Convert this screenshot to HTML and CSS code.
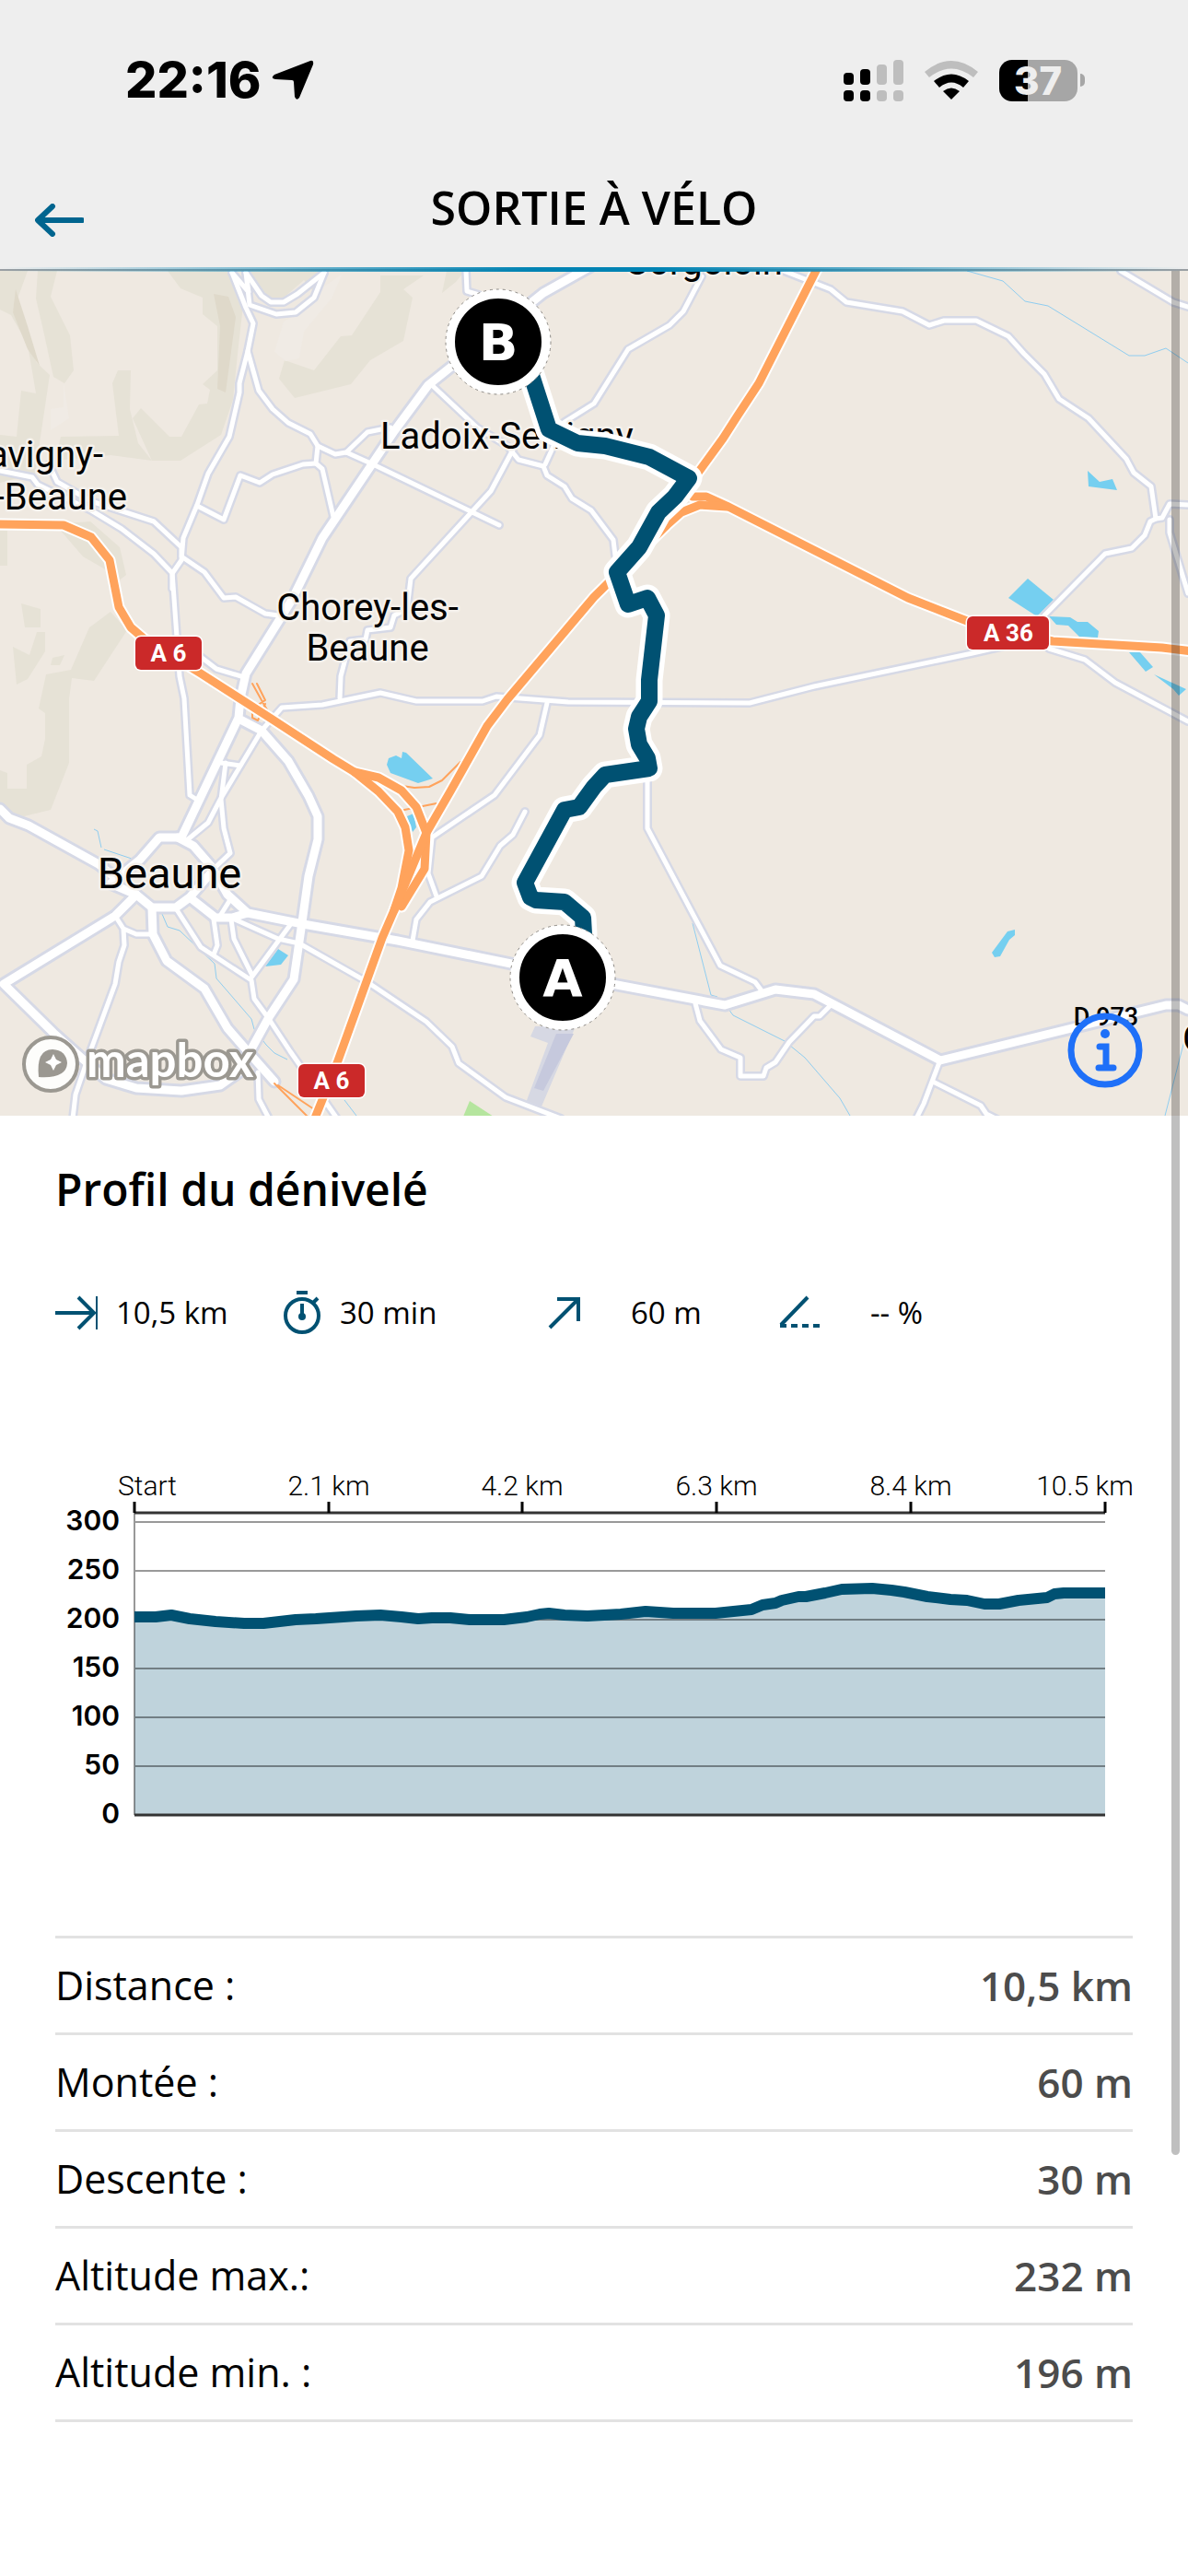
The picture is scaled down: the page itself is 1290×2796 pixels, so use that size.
FILE: index.html
```html
<!DOCTYPE html>
<html lang="fr">
<head>
  <meta charset="UTF-8">
  <meta name="viewport" content="width=device-width, initial-scale=1.0">
  <title>Sortie à vélo</title>
  <link rel="stylesheet" href="styles.css">
</head>
<body>
  <header class="top">
    <div class="status">
      <div class="status-left">
        <span class="time">22:16</span>
        <svg class="location" viewBox="0 0 46 44"><path d="M42 1q4-1 3 4L30 41q-3 4-5-1l-1-16q0-2-2-2L4 21q-6-1-1-5z"/></svg>
      </div>
      <div class="status-right">
        <svg class="signal" viewBox="0 0 65 45">
          <rect y="14" width="11" height="13" rx="4"/><rect y="33" width="11" height="12" rx="4"/>
          <rect x="18" y="10" width="11" height="17" rx="4"/><rect x="18" y="33" width="11" height="12" rx="4"/>
          <g class="dim"><rect x="36" y="5" width="11" height="22" rx="4"/><rect x="36" y="33" width="11" height="12" rx="4"/>
          <rect x="54" width="11" height="27" rx="4"/><rect x="54" y="33" width="11" height="12" rx="4"/></g>
        </svg>
        <svg class="wifi" viewBox="0 0 58 42">
          <path class="dim" d="M0 12Q29-12 58 12L53 18Q29-1 5 18z"/>
          <path d="M10 22Q29 7 48 22L42 29Q29 18 16 29z"/>
          <path d="M20 33Q29 26 38 33L29 42z"/>
        </svg>
        <div class="battery"><span class="battery-body">37</span><span class="battery-tip"></span></div>
      </div>
    </div>
    <div class="navbar">
      <button class="back" type="button" aria-label="Retour">
        <svg viewBox="0 0 53 36"><path d="M51 18H4M19 3L3 18L19 33"/></svg>
      </button>
      <h1>SORTIE À VÉLO</h1>
    </div>
  </header>

  <main>
    <section class="map">
      <svg class="map-canvas" viewBox="0 0 1290 917" preserveAspectRatio="xMidYMid slice">
        <!-- relief -->
        <g class="hill">
          <path d="M0 0H30L14 44L40 100L54 113L38 220L0 230V178L18 180L23 130L39 133L30 80L12 48L0 42z"/>
          <path d="M41 0H62L55 28L76 70L80 108L70 122L58 115L46 60L39 30z"/>
          <path d="M182 0H250L264 37L258 90L253 140L240 178L196 206L165 206L144 160L153 149L184 180H197L216 145L225 144L228 129L220 123L236 108V60L220 47V29L196 19z"/>
          <path d="M128 108H142L141 150L150 187L165 206L120 200L60 206L66 180L129 179L122 122z"/>
          <path d="M270 0H350L340 22L330 10L300 36L285 27z"/>
          <path d="M413 5H460L438 20L448 29L438 76L402 97L381 123L320 138L303 117L309 97L341 108L370 71L382 70L413 23z"/>
          <path d="M485 0H505L495 12L480 24z"/>
          <path d="M0 282H8V320H0z"/>
          <path d="M60 275L98 272L130 300L137 330L118 345L116 325L90 310z"/>
          <path d="M23 361L44 367V387H27z"/>
          <path d="M100 385L120 370L138 390L102 445L78 442L75 465V534L55 585L26 592L0 586V542L8 545V562H29V536L45 527L49 508V480L42 475L50 438L77 433L97 387z"/>
          <path d="M14 408L32 417L40 392H49V413L30 443L18 449z"/>
          <path d="M57 420L70 417L65 428H55z"/>
        </g>
        <g class="hill-dark">
          <path d="M17 20L30 60L43 103L30 85L14 45z"/>
          <path d="M232 25L248 28L256 50L245 132L236 128L239 60z"/>
        </g>
        <g class="hill-light">
          <path d="M372 3L336 28L329 43L308 55L298 88L310 98L325 95L330 66L360 30z"/>
          <path d="M69 122L75 160L55 173V150L69 148z"/>
        </g>

        <!-- water and fields -->
        <g class="water">
          <path d="M420 536L422 529L430 526L436 529L437 522L441 523L470 551L454 556L424 545z"/>
          <path d="M442 592L449 589L452 604L448 609z"/>
          <path d="M302 736L313 743L305 753L288 755z"/>
          <path d="M1181 217L1194 229L1208 226L1213 238L1182 234z"/>
          <path d="M1116 334L1095 355L1126 375L1144 357z"/>
          <path d="M1139 375L1162 376L1170 381L1181 381L1193 391L1192 398L1172 397L1160 385L1147 384z"/>
          <path d="M1226 414H1238L1252 430L1244 435z"/>
          <path d="M1253 438L1288 454L1280 461L1274 454z"/>
          <path d="M1094 717L1102 715V721L1096 726L1086 744L1080 745L1077 740z"/>
        </g>
        <g class="stream">
          <path d="M1050 0L1089 11L1113 33L1138 38L1226 92H1243L1266 84L1290 100"/>
          <path d="M752 708L772 786L779 788M791 801L796 808L852 836L874 854L912 898L923 917"/>
          <path d="M102 606L106 608L110 626M113 628L146 639M176 698L182 712L195 716L233 752L235 768L248 783L273 812L276 823L289 840L298 849L312 856"/>
          <path d="M1290 820L1265 917M374 900L387 917"/>
        </g>
        <path class="park" d="M510 901L536 918H503z"/>
        <path class="runway-light" d="M581 820L576 831L595 838L571 903L588 907L625 820z"/>
        <path class="runway" d="M604 828H623L590 890L580 887z"/>

        <!-- roads: every path is drawn once for its edge and once for its surface -->
        <defs>
          <g id="small">
            <path d="M187 327L195 440L200 464L206 569L214 574"/>
            <path d="M252 2L267 40L275 57L269 87L260 122V132L249 180L226 220L214 254L199 290L197 314L188 327"/>
            <path d="M267 2L284 27L294 34H308L323 25L352 2"/>
            <path d="M252 2L270 23L267 2L271 37L300 47L321 45L341 29L352 2"/>
            <path d="M269 87L281 130L296 150L313 165L337 177L345 190L364 199L376 197L405 210L542 276"/>
            <path d="M376 197L399 175L424 170"/>
            <path d="M345 190L343 209L350 215L362 267"/>
            <path d="M343 209L329 210L296 221L282 230L261 222L243 270L214 255"/>
            <path d="M0 217L35 224L41 232L99 260L132 280L167 307L187 328V345"/>
            <path d="M53 210L62 229L99 250L167 272L197 300V310L222 327L243 355L256 354L288 372L302 374"/>
            <path d="M218 419L235 432L265 441"/>
            <path d="M469 124L518 170L551 190L563 205L590 212L594 222L613 234L621 247L642 260L666 292L668 309"/>
            <path d="M557 194L533 239L510 264L446 334L442 367L428 374L424 387L399 390L397 400L380 402L370 440L369 464"/>
            <path d="M284 499L306 474L350 471L413 458L452 467H524L539 462L617 468L814 469L884 451L1056 415L1100 405"/>
            <path d="M1139 410L1178 422L1211 447L1290 489"/>
            <path d="M851 0L902 20L919 34L980 44L1009 59L1025 54H1060L1095 71L1112 90L1134 112L1150 139L1182 160L1223 204L1231 219L1250 234L1255 269L1262 268L1270 253L1290 254"/>
            <path d="M1255 269L1249 272L1243 287L1229 301L1200 307L1134 374"/>
            <path d="M1217 0L1274 34L1290 39"/>
            <path d="M1270 270V284L1290 350"/>
            <path d="M762 6L742 44L727 59L682 85L645 144L613 164L592 210"/>
            <path d="M506 0L507 22L520 26"/>
            <path d="M703 554V605L782 754L820 772L826 780"/>
            <path d="M902 797L890 809H884L857 837L842 859L832 865L829 874H804V854L783 845L760 814L755 795"/>
            <path d="M1020 859L1003 904L995 920"/>
            <path d="M1013 880L1065 906L1071 915L1085 922"/>
            <path d="M594 469L586 504L537 569L469 615L465 654L474 679"/>
            <path d="M570 587L557 612L543 624L523 657L467 685L452 704L448 727"/>
            <path d="M255 704L302 725L325 730L399 772L463 815L491 842L498 860L549 897L609 920"/>
            <path d="M284 499L239 574L226 599L204 617"/>
            <path d="M240 534L261 537M245 534L240 574L243 605L250 632L232 649"/>
            <path d="M315 710L273 767M251 704L254 725L274 765"/>
            <path d="M191 692L218 734L273 770L276 790L292 812L315 847L366 920"/>
            <path d="M232 704L236 732L232 742M249 684L239 700"/>
            <path d="M125 700L134 714L148 720H165M134 714L135 732L129 750L125 774L97 850L82 894L79 920"/>
            <path d="M280 870L281 899L292 920"/>
          </g>
          <g id="main">
            <path d="M640 -4L590 24L465 124L428 174L350 290L317 357L267 437L261 464L259 485L197 615H173L152 639L120 665L148 677L125 700L4 774L58 827L95 860L115 877L148 887L197 890L239 884L259 870L292 810L319 769L328 707L335 657L345 617V592L335 570L313 532L284 499L261 487"/>
            <path d="M193 615L210 624L230 647L247 677L269 697L329 709L432 727L555 752L670 775L787 797L842 780L884 785L1021 857L1266 797H1280L1290 802"/>
            <path d="M148 677L165 691H191L206 680L232 650M206 680L234 702H252L269 697"/>
            <path d="M165 691L166 720L181 749L222 779L247 822L267 845L298 880"/>
            <path d="M0 584L10 594L31 602L107 644L123 657"/>
          </g>
          <g id="motorway">
            <path d="M-5 275L69 276L99 289L119 314L129 365L142 387L156 399L218 437L296 487L362 530L385 544L411 565L432 587L440 604L444 629L436 670L428 694L415 724L366 860L341 922"/>
            <path d="M385 544L411 550L436 564L452 582L463 610L461 649L436 690"/>
            <path d="M888 -4L824 122L801 157L785 182L758 219L723 277L645 354L551 465L529 494L489 565L463 610L436 675L428 694"/>
            <path d="M752 245H767L789 255L986 355L1050 380L1143 402L1262 409L1295 413"/>
            <path d="M789 256L760 254L740 262L723 277"/>
          </g>
          <path id="ride" d="M576 110L596 172L627 187L657 190L705 202L748 225L733 245L715 262L694 300L670 327L682 362L703 355L713 374L705 444V467L694 484L691 497L694 514L703 529L705 540L657 547L645 560L629 582L613 585L570 664L576 680L582 683L613 685L633 702L634 720"/>
        </defs>
        <use href="#small" class="small-edge"/>
        <use href="#main" class="main-edge"/>
        <use href="#small" class="small-road"/>
        <use href="#main" class="main-road"/>
        <g class="slip">
          <path d="M385 544L420 582L434 586L474 578M411 550L430 558L450 561L466 560L480 553L500 533"/>
          <path d="M274 448L284 466L296 487M279 448L288 466L274 475V485L280 488L288 470M298 882L336 920M302 884L344 912"/>
        </g>
        <use href="#motorway" class="motorway-edge"/>
        <use href="#motorway" class="motorway-road"/>

        <!-- place names -->
        <g class="place">
          <text x="764" y="4" text-anchor="middle">Corgoloin</text>
          <text x="413" y="193">Ladoix-Serrigny</text>
          <text x="112" y="213" text-anchor="end">Savigny-</text>
          <text x="138" y="259" text-anchor="end">lès-Beaune</text>
          <text x="399" y="379" text-anchor="middle">Chorey-les-</text>
          <text x="399" y="423" text-anchor="middle">Beaune</text>
          <text x="1284" y="847">C</text>
          <text class="town" x="184" y="670" text-anchor="middle">Beaune</text>
        </g>
        <text class="road-name" x="1201" y="819" text-anchor="middle">D 973</text>
        <g class="shield">
          <rect x="147" y="397" width="72" height="36" rx="6"/><text x="183" y="424">A 6</text>
          <rect x="324" y="861" width="72" height="36" rx="6"/><text x="360" y="888">A 6</text>
          <rect x="1050" y="375" width="89" height="36" rx="6"/><text x="1095" y="402">A 36</text>
        </g>

        <!-- ride -->
        <use href="#ride" class="ride-edge"/>
        <use href="#ride" class="ride-line"/>
        <g class="marker">
          <circle cx="541" cy="77" r="52"/><circle class="marker-dots" cx="541" cy="77" r="57"/><text x="541" y="97">B</text>
          <circle cx="611" cy="767" r="52"/><circle class="marker-dots" cx="611" cy="767" r="57"/><text x="611" y="787">A</text>
        </g>

        <g class="mapbox">
          <circle cx="55" cy="861" r="29"/>
          <path class="mapbox-drop" d="M42 875Q39 845 57 845Q72 846 73 860Q72 877 42 875z"/>
          <path class="mapbox-star" d="M58 850L61 856L67 859L61 862L58 868L55 862L49 859L55 856z"/>
          <text x="94" y="875">mapbox</text>
        </g>
      </svg>
      <button class="info" type="button" aria-label="Informations">
        <svg viewBox="0 0 82 82"><circle class="ring" cx="41" cy="41" r="37"/><circle cx="41" cy="23" r="5"/><path d="M35 37H42V60M34 60H50"/></svg>
      </button>
    </section>

    <section class="profile">
      <h2>Profil du dénivelé</h2>
      <ul class="stats">
        <li class="stat distance"><svg viewBox="0 0 46 48"><path d="M0 24H42M25 7L42 24L25 41"/><path class="thin" d="M45 6V42"/></svg>10,5 km</li>
        <li class="stat duration"><svg viewBox="0 0 42 48"><circle cx="21" cy="27" r="18"/><path d="M15 2H27M33 13L38 8M21 14V30"/><circle class="dot" cx="21" cy="28" r="4"/></svg>30 min</li>
        <li class="stat climb"><svg viewBox="0 0 36 48"><path d="M2 40L33 9M10 9H33V33"/></svg>60 m</li>
        <li class="stat slope"><svg viewBox="0 0 46 48"><path d="M3 37L32 7"/><path class="dotted" d="M2 38H46"/></svg>-- %</li>
      </ul>

      <svg class="chart" viewBox="0 0 1170 410" role="img" aria-label="Profil altimétrique">
        <path class="area" d="M86 165L109 165L126 163L146 167L174 170L205 172H226L261 168L283 167L327 164L353 163L376 165L394 167L409 166H429L450 168H487L512 165L526 162L536 161L553 163L578 164L614 162L641 159L671 161H717L756 157L768 152L782 150L789 147L807 143H815L836 139L854 135L887 134L908 136L922 138L947 143L972 146L990 147L1009 151H1025L1046 147L1077 144L1085 140L1095 139H1140V380H86z"/>
        <path class="grid" d="M86 62H1140M86 115H1140M86 168H1140M86 221H1140M86 274H1140M86 327H1140M86 52V380"/>
        <path class="axis" d="M86 52H1140M86 380H1140"/>
        <path class="axis tick" d="M86 40V52M297 40V52M507 40V52M718 40V52M929 40V52M1140 40V52"/>
        <path class="line" d="M86 165L109 165L126 163L146 167L174 170L205 172H226L261 168L283 167L327 164L353 163L376 165L394 167L409 166H429L450 168H487L512 165L526 162L536 161L553 163L578 164L614 162L641 159L671 161H717L756 157L768 152L782 150L789 147L807 143H815L836 139L854 135L887 134L908 136L922 138L947 143L972 146L990 147L1009 151H1025L1046 147L1077 144L1085 140L1095 139H1140"/>
        <g class="km">
          <text x="100" y="33">Start</text><text x="297" y="33">2.1 km</text><text x="507" y="33">4.2 km</text>
          <text x="718" y="33">6.3 km</text><text x="929" y="33">8.4 km</text><text x="1118" y="33">10.5 km</text>
        </g>
        <g class="metres">
          <text x="70" y="71">300</text><text x="70" y="124">250</text><text x="70" y="177">200</text><text x="70" y="230">150</text>
          <text x="70" y="283">100</text><text x="70" y="336">50</text><text x="70" y="389">0</text>
        </g>
      </svg>

      <table class="details">
        <tr><th scope="row">Distance :</th><td>10,5 km</td></tr>
        <tr><th scope="row">Montée :</th><td>60 m</td></tr>
        <tr><th scope="row">Descente :</th><td>30 m</td></tr>
        <tr><th scope="row">Altitude max.:</th><td>232 m</td></tr>
        <tr><th scope="row">Altitude min. :</th><td>196 m</td></tr>
      </table>
    </section>
    <div class="scrollbar"></div>
  </main>
</body>
</html>
```

FILE: styles.css
```css
* {
  box-sizing: border-box;
}
body {
  margin: 0;
  min-height: 100vh;
  background: #fff;
  color: #000;
  font-family: "Open Sans", "Noto Sans", sans-serif;
}
svg {
  display: block;
}
button {
  padding: 0;
  border: 0;
  background: none;
  cursor: pointer;
}

/* header */
.top {
  position: relative;
  z-index: 1;
  background: #eee;
  border-bottom: 2px solid #9a9fa3;
}
.top::after {
  content: "";
  position: absolute;
  left: 0;
  right: 0;
  bottom: -3px;
  height: 5px;
  background: linear-gradient(90deg, transparent, #0083b3 45%, #0083b3 55%, transparent);
}
.status {
  display: flex;
  justify-content: space-between;
  align-items: center;
  height: 174px;
  padding: 0 112px 0 136px;
}
.status-left,
.status-right {
  display: flex;
  align-items: center;
}
.status-left {
  gap: 12px;
}
.status-right {
  gap: 23px;
}
.time {
  font-family: Inter, sans-serif;
  font-size: 54px;
  font-weight: 800;
  line-height: 60px;
}
.location {
  width: 46px;
  height: 44px;
}
.signal {
  width: 65px;
  height: 45px;
}
.wifi {
  width: 58px;
  height: 42px;
}
.dim {
  fill: #bebebe;
}
.battery {
  display: flex;
  align-items: center;
  gap: 3px;
}
.battery-body {
  width: 85px;
  height: 45px;
  padding-left: 16px;
  border-radius: 14px;
  background: linear-gradient(90deg, #000 37%, #a6a6a6 37%);
  color: #eee;
  font-family: Inter, sans-serif;
  font-size: 42px;
  font-weight: 800;
  line-height: 45px;
}
.battery-tip {
  width: 5px;
  height: 14px;
  border-radius: 0 7px 7px 0;
  background: #a6a6a6;
}
.navbar {
  display: grid;
  grid-template-columns: 130px 1fr 130px;
  align-items: center;
  height: 118px;
}
.back {
  padding: 12px 38px 0;
}
.back svg {
  width: 53px;
  height: 36px;
  fill: none;
  stroke: #00658f;
  stroke-width: 6;
  stroke-linecap: round;
  stroke-linejoin: round;
}
h1 {
  margin: 0 0 16px;
  font-size: 50px;
  font-weight: 600;
  line-height: 60px;
  text-align: center;
}

/* map */
main {
  position: relative;
}
.map {
  position: relative;
  background: #efe9e1;
}
.map-canvas {
  width: 100%;
}
.hill {
  fill: #e6e2d6;
}
.hill-dark {
  fill: #dfd9ca;
}
.hill-light {
  fill: #f0ebe5;
}
.water {
  fill: #75cff0;
}
.stream {
  fill: none;
  stroke: #8fcdf0;
  stroke-width: 1;
}
.park {
  fill: #b5e59e;
}
.runway-light {
  fill: #d6d8e3;
}
.runway {
  fill: #c6c9dd;
}
.small-edge,
.small-road,
.main-edge,
.main-road,
.motorway-edge,
.motorway-road,
.slip,
.ride-edge,
.ride-line {
  fill: none;
  stroke-linejoin: round;
  stroke-linecap: round;
}
.small-edge {
  stroke: #d6d9e6;
  stroke-width: 10;
}
.main-edge {
  stroke: #d6d9e6;
  stroke-width: 15;
}
.small-road {
  stroke: #fff;
  stroke-width: 5;
}
.main-road {
  stroke: #fff;
  stroke-width: 9;
}
.slip {
  stroke: #ffa35c;
  stroke-width: 2;
}
.motorway-edge {
  stroke: #fff;
  stroke-width: 13;
}
.motorway-road {
  stroke: #ffa35c;
  stroke-width: 9;
}
.place {
  font-family: Roboto, sans-serif;
  font-size: 40px;
  stroke: #f5f1ec;
  stroke-width: 5;
  stroke-linejoin: round;
  paint-order: stroke;
}
.town {
  font-size: 47px;
}
.road-name {
  font-family: Roboto, sans-serif;
  font-size: 27px;
  font-weight: 500;
}
.shield rect {
  fill: #cb2929;
  stroke: #fff;
  stroke-width: 3;
  paint-order: stroke;
}
.shield text {
  fill: #fff;
  font-family: Roboto, sans-serif;
  font-size: 26px;
  font-weight: 700;
  text-anchor: middle;
}
.ride-edge {
  stroke: #fff;
  stroke-width: 29;
}
.ride-line {
  stroke: #005172;
  stroke-width: 18;
}
.marker circle {
  stroke: #fff;
  stroke-width: 10;
}
.marker .marker-dots {
  fill: none;
  stroke: #8c8984;
  stroke-width: 1;
  stroke-dasharray: 3 4;
}
.marker text {
  fill: #fff;
  font-family: "DejaVu Sans", sans-serif;
  font-size: 56px;
  font-weight: 700;
  text-anchor: middle;
}
.mapbox circle {
  fill: #fdfdfb;
  stroke: #9b9891;
  stroke-width: 4;
}
.mapbox-drop {
  fill: #9b9891;
}
.mapbox-star {
  fill: #fff;
}
.mapbox text {
  fill: #fff;
  stroke: #9b9891;
  stroke-width: 7;
  stroke-linejoin: round;
  paint-order: stroke;
  font-family: Lato, sans-serif;
  font-size: 51px;
  font-weight: 700;
}
.info {
  position: absolute;
  right: 49px;
  bottom: 30px;
}
.info svg {
  width: 82px;
  height: 82px;
  fill: #1f70f8;
}
.info path,
.info .ring {
  fill: none;
  stroke: #1f70f8;
  stroke-width: 7;
  stroke-linecap: round;
}

/* elevation profile */
.profile {
  padding: 50px 60px 100px;
}
h2 {
  margin: 0;
  font-size: 48px;
  font-weight: 600;
  line-height: 60px;
}
.stats {
  display: grid;
  grid-template-columns: 247fr 288fr 250fr 385fr;
  margin: 74px 0 0;
  padding: 0;
  list-style: none;
}
.stat {
  display: flex;
  align-items: center;
  gap: 20px;
  font-size: 33px;
  line-height: 60px;
}
.stat svg {
  height: 48px;
  fill: none;
  stroke: #005172;
  stroke-width: 4;
}
.stat .thin {
  stroke-width: 2;
}
.stat .dot {
  fill: #005172;
  stroke: none;
}
.stat .dotted {
  stroke-dasharray: 7 5;
}
.climb,
.slope {
  gap: 54px;
}
.chart {
  width: 100%;
  margin: 135px 0 101px;
}
.area {
  fill: #bfd3dc;
}
.grid {
  fill: none;
  stroke: #000;
  stroke-opacity: 0.4;
  stroke-width: 2;
}
.axis {
  fill: none;
  stroke: #333;
  stroke-width: 3;
}
.tick {
  stroke: #000;
}
.line {
  fill: none;
  stroke: #005172;
  stroke-width: 12;
  stroke-linejoin: round;
}
.km {
  font-family: Roboto, sans-serif;
  font-size: 30px;
  font-weight: 300;
  text-anchor: middle;
}
.metres {
  font-family: Inter, sans-serif;
  font-size: 30px;
  font-weight: 600;
  text-anchor: end;
}
.details {
  width: 100%;
  border-collapse: collapse;
  font-size: 44px;
  line-height: 60px;
}
.details tr {
  height: 105px;
  border-top: 3px solid #e2e2e2;
  border-bottom: 3px solid #e2e2e2;
}
.details th,
.details td {
  padding: 0;
}
.details th {
  font-size: 43px;
  font-weight: 400;
  text-align: left;
}
.details td {
  color: #4c4c4c;
  font-weight: 600;
  text-align: right;
}
.scrollbar {
  position: absolute;
  top: 0;
  right: 9px;
  width: 9px;
  height: 2045px;
  border-radius: 0 0 5px 5px;
  background: rgba(0, 0, 0, 0.25);
}
```
